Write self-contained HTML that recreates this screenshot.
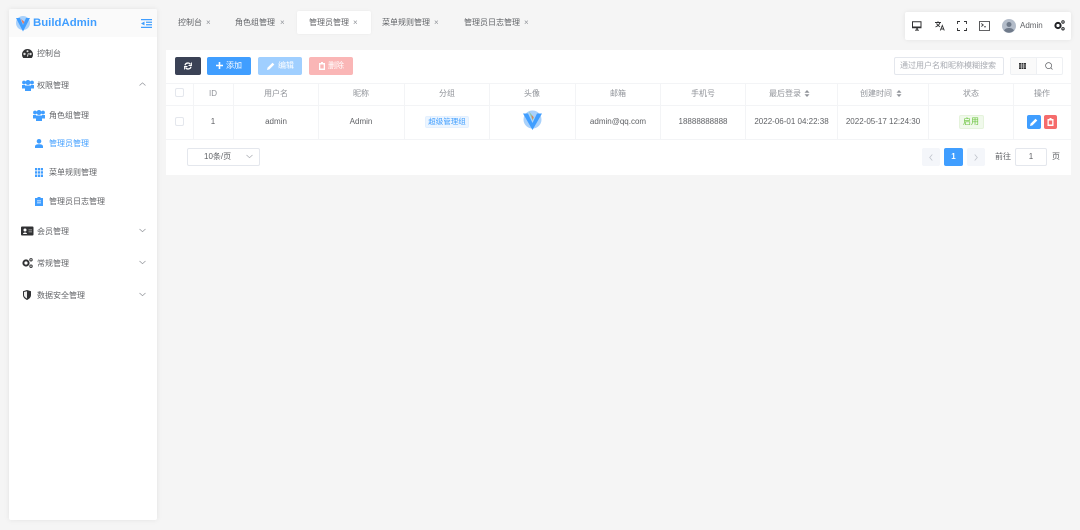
<!DOCTYPE html>
<html lang="zh"><head><meta charset="utf-8"><style>
*{box-sizing:border-box;margin:0;padding:0}
html,body{width:1080px;height:530px;overflow:hidden;background:#f5f5f5;font-family:"Liberation Sans","Noto Sans CJK SC",sans-serif;font-size:8px;color:#303133}
#w{position:absolute;left:0;top:0;width:1080px;height:530px;filter:blur(.35px)}
.a{position:absolute;white-space:nowrap}
.t{position:absolute;white-space:nowrap;line-height:12px}
.c{position:absolute;white-space:nowrap;text-align:center;line-height:12px;transform:translateX(-50%)}
.g{color:#606266}.h{color:#909399}
.ln{position:absolute;background:#f3f4f6}
svg{position:absolute;display:block}
.btn{position:absolute;top:57px;height:18px;border-radius:2px;color:#fff;line-height:18px}
.x{position:absolute;color:#909399;font-size:8px;line-height:12px}
</style></head><body><div id="w">
<div class="a" style="left:9px;top:9px;width:148px;height:511px;background:#fff;border-radius:2px;box-shadow:0 0 6px rgba(0,0,0,.08)"></div>
<div class="a" style="left:9px;top:9px;width:148px;height:28px;background:#fafafa;border-radius:2px 2px 0 0"></div>
<svg style="left:15px;top:15px" width="16" height="17" viewBox="0 0 16 17"><circle cx="8" cy="8" r="7" fill="#a9d1fb"/><path d="M1 3h4l3 7 3-7h4L8 16.500z" fill="#409eff"/><path d="M6 4l2 5 1.500-2z" fill="#e8785c"/></svg>
<div class="t" style="left:33px;top:16px;font-size:11.400px;line-height:15px;font-weight:700;color:#409eff">BuildAdmin</div>
<svg style="left:141px;top:19px" width="11" height="9" viewBox="0 0 11 9" fill="#409eff"><path d="M0 0h11v1.300H0zM5 2.600h6v1.300H5zM5 5.100h6v1.300H5zM0 7.700h11V9H0zM3.500 2.500v4L0 4.500z"/></svg>

<svg style="left:22px;top:49px" width="11" height="9" viewBox="0 0 11 9"><path d="M5.500 0A5.500 5.500 0 0 0 0 5.500C0 7 .5 8 1.300 9h8.400C10.500 8 11 7 11 5.500A5.500 5.500 0 0 0 5.500 0z" fill="#303133"/><circle cx="2.500" cy="5" r="1.200" fill="#ddd"/><circle cx="8.500" cy="5" r="1.200" fill="#ddd"/><circle cx="5.500" cy="2.300" r="1" fill="#ddd"/><path d="M5 7.500l1-3.500.7.200L6 7.500z" fill="#fff"/></svg>
<div class="t g" style="left:37px;top:48px">控制台</div>
<svg style="left:22px;top:80px" width="12" height="11" viewBox="0 0 12 11" fill="#409eff"><circle cx="2" cy="2.500" r="1.900"/><circle cx="10" cy="2.500" r="1.900"/><circle cx="6" cy="2.500" r="2.500"/><path d="M0 5h3v3.500H0zM9 5h3v3.500H9z"/><path d="M3 5.500h6V11H3z"/></svg>
<div class="t g" style="left:37px;top:80px">权限管理</div>
<svg style="left:139px;top:82px" width="7" height="5" viewBox="0 0 7 5" fill="none" stroke="#909399" stroke-width=".7"><path d="M.5 3.500L3.500 .8l3 2.700"/></svg>

<svg style="left:33px;top:110px" width="12" height="11" viewBox="0 0 12 11" fill="#409eff"><circle cx="2" cy="2.500" r="1.900"/><circle cx="10" cy="2.500" r="1.900"/><circle cx="6" cy="2.500" r="2.500"/><path d="M0 5h3v3.500H0zM9 5h3v3.500H9z"/><path d="M3 5.500h6V11H3z"/></svg>
<div class="t g" style="left:49px;top:110px">角色组管理</div>
<svg style="left:35px;top:139px" width="8" height="9" viewBox="0 0 8 9" fill="#409eff"><circle cx="4" cy="2.300" r="2.300"/><path d="M0 9V7.500C0 6 1.500 5.300 4 5.300S8 6 8 7.500V9z"/></svg>
<div class="t" style="left:49px;top:138px;color:#409eff">管理员管理</div>
<svg style="left:35px;top:168px" width="8" height="9" viewBox="0 0 8 9" fill="#409eff"><path d="M0 0h2.200v2.400H0zM2.900 0h2.200v2.400H2.900zM5.800 0H8v2.400H5.800zM0 3.200h2.200v2.400H0zM2.900 3.200h2.200v2.400H2.900zM5.800 3.200H8v2.400H5.800zM0 6.500h2.200V9H0zM2.900 6.500h2.200V9H2.900zM5.800 6.500H8V9H5.800z"/></svg>
<div class="t g" style="left:49px;top:167px">菜单规则管理</div>
<svg style="left:35px;top:197px" width="8" height="9" viewBox="0 0 8 9" fill="#409eff"><path d="M0 1h2.500V0h3v1H8v8H0zM2 3.500v.8h4v-.8zM2 5.500v.8h4v-.8z" fill-rule="evenodd"/></svg>
<div class="t g" style="left:49px;top:196px">管理员日志管理</div>

<svg style="left:21px;top:226px" width="13" height="10" viewBox="0 0 13 10"><rect width="12.500" height="9" y=".5" rx="1" fill="#303133"/><circle cx="4" cy="4" r="1.500" fill="#fff"/><path d="M2 8c0-2 4-2 4 0z" fill="#fff"/><path d="M7.500 3.500h3.500v.8H7.500zM7.500 5.500h3.500v.8H7.500z" fill="#bbb"/></svg>
<div class="t g" style="left:37px;top:226px">会员管理</div>
<svg style="left:139px;top:228px" width="7" height="5" viewBox="0 0 7 5" fill="none" stroke="#909399" stroke-width=".7"><path d="M.5 1l3 2.700 3-2.700"/></svg>
<svg style="left:22px;top:258px" width="11" height="10" viewBox="0 0 11 10"><circle cx="4" cy="5" r="2.600" fill="none" stroke="#303133" stroke-width="2"/><circle cx="9" cy="1.800" r="1.200" fill="none" stroke="#303133" stroke-width="1"/><circle cx="9" cy="8.200" r="1.200" fill="none" stroke="#303133" stroke-width="1"/></svg>
<div class="t g" style="left:37px;top:258px">常规管理</div>
<svg style="left:139px;top:260px" width="7" height="5" viewBox="0 0 7 5" fill="none" stroke="#909399" stroke-width=".7"><path d="M.5 1l3 2.700 3-2.700"/></svg>
<svg style="left:23px;top:290px" width="8" height="10" viewBox="0 0 8 10"><path d="M4 0l4 1.200V5c0 2.500-2 4-4 5-2-1-4-2.500-4-5V1.200z" fill="#303133"/><path d="M4 1.200L1 2v3c0 1.700 1.500 2.800 3 3.500z" fill="#eee"/></svg>
<div class="t g" style="left:37px;top:290px">数据安全管理</div>
<svg style="left:139px;top:292px" width="7" height="5" viewBox="0 0 7 5" fill="none" stroke="#909399" stroke-width=".7"><path d="M.5 1l3 2.700 3-2.700"/></svg>

<div class="t g" style="left:178px;top:17px">控制台</div><div class="x" style="left:206px;top:17px">×</div>
<div class="t g" style="left:235px;top:17px">角色组管理</div><div class="x" style="left:280px;top:17px">×</div>
<div class="a" style="left:297px;top:11px;width:74px;height:23px;background:#fff;border-radius:2px;box-shadow:0 0 3px rgba(0,0,0,.05)"></div>
<div class="t g" style="left:309px;top:17px">管理员管理</div><div class="x" style="left:353px;top:17px">×</div>
<div class="t g" style="left:382px;top:17px">菜单规则管理</div><div class="x" style="left:434px;top:17px">×</div>
<div class="t g" style="left:464px;top:17px">管理员日志管理</div><div class="x" style="left:524px;top:17px">×</div>

<div class="a" style="left:905px;top:12px;width:166px;height:28px;background:#fff;border-radius:2px;box-shadow:0 0 5px rgba(0,0,0,.08)"></div>
<svg style="left:912px;top:21px" width="10" height="10" viewBox="0 0 10 10"><path d="M.5.800h8.500v6H.5z" fill="none" stroke="#303133"/><path d="M1 5.500h8v1.300H1zM3 8.800h4v.8H3zM4.300 6.500h1.500v2.500H4.300z" fill="#303133"/></svg>
<svg style="left:935px;top:21px" width="10" height="10" viewBox="0 0 10 10" fill="none" stroke="#303133" stroke-width=".9"><path d="M0 1.500h6M3 .2v1.300M5 1.500C4.500 3.500 3 5 .5 6M1.500 2.500C2.500 4.500 3.500 5 5 5.800M5.300 9.500l2-5 2 5M6 8h2.600"/></svg>
<svg style="left:957px;top:21px" width="10" height="10" viewBox="0 0 10 10" fill="none" stroke="#303133" stroke-width=".9"><path d="M.5 3V.5H3M7 .5h2.500V3M9.500 7v2.500H7M3 9.500H.5V7"/></svg>
<svg style="left:979px;top:21px" width="11" height="10" viewBox="0 0 11 10" fill="none" stroke="#303133" stroke-width=".8"><path d="M.5.500h10v9H.5zM2.300 2.500L4.300 4 2.300 5.500M5 5.800h2"/></svg>
<svg style="left:1002px;top:19px" width="14" height="14" viewBox="0 0 14 14"><circle cx="7" cy="7" r="7" fill="#b3bcc9"/><circle cx="7" cy="5.500" r="2.500" fill="#6f7a8a"/><path d="M2 11.500C3 9.500 5 9 7 9s4 .5 5 2.500A7 7 0 0 1 2 11.500z" fill="#6f7a8a"/></svg>
<div class="t g" style="left:1020px;top:20px">Admin</div>
<svg style="left:1054px;top:20px" width="11" height="11" viewBox="0 0 11 11"><circle cx="4" cy="5.500" r="2.600" fill="none" stroke="#202225" stroke-width="2"/><circle cx="9" cy="2" r="1.200" fill="none" stroke="#202225" stroke-width="1"/><circle cx="9" cy="8.800" r="1.200" fill="none" stroke="#202225" stroke-width="1"/></svg>

<div class="a" style="left:166px;top:50px;width:905px;height:125px;background:#fff"></div>
<div class="a" style="left:175px;top:57px;width:26px;height:18px;background:#3b4256;border-radius:2px"></div>
<svg style="left:184px;top:62px" width="8" height="8" viewBox="0 0 8 8" fill="none" stroke="#fff" stroke-width="1.300"><path d="M1 3.300A3 3 0 0 1 6.500 2.500M7 4.700A3 3 0 0 1 1.500 5.500"/><path d="M7.500.5v3h-3M.5 7.500v-3h3" stroke-width=".9"/></svg>
<div class="btn" style="left:207px;width:44px;background:#409eff"></div>
<svg style="left:216px;top:62px" width="7" height="7" viewBox="0 0 7 7" fill="#fff"><path d="M2.700 0h1.600v2.700H7v1.600H4.300V7H2.700V4.300H0V2.700h2.700z"/></svg>
<div class="t" style="left:226px;top:60px;color:#fff">添加</div>
<div class="btn" style="left:258px;width:44px;background:#a0cfff"></div>
<svg style="left:267px;top:62px" width="8" height="8" viewBox="0 0 8 8" fill="#fff"><path d="M0 8l.6-2.400L5.500.7l1.800 1.800L2.400 7.400z"/></svg>
<div class="t" style="left:278px;top:60px;color:#fff">编辑</div>
<div class="btn" style="left:309px;width:44px;background:#fab6b6"></div>
<svg style="left:319px;top:62px" width="6" height="8" viewBox="0 0 6 8" fill="#fff"><path d="M0 1h2V0h2v1h2v7H0zM1.300 2.500v4h3.400v-4z" fill-rule="evenodd"/></svg>
<div class="t" style="left:328px;top:60px;color:#fff">删除</div>

<div class="a" style="left:894px;top:57px;width:110px;height:18px;border:1px solid #e4e7ed;border-radius:2px"></div>
<div class="t" style="left:900px;top:60px;color:#a8abb2">通过用户名和昵称模糊搜索</div>
<div class="a" style="left:1010px;top:57px;width:53px;height:18px;border:1px solid #eef0f3;border-radius:2px"><div style="position:absolute;left:0;top:0;width:26px;height:16px;background:#fafafa;border-right:1px solid #eef0f3"></div></div>
<svg style="left:1019px;top:63px" width="7" height="6" viewBox="0 0 7 6" fill="#303133"><path d="M0 0h2v1.700H0zM2.500 0h2v1.700h-2zM5 0h2v1.700H5zM0 2.200h2v1.600H0zM2.500 2.200h2v1.600h-2zM5 2.200h2v1.600H5zM0 4.300h2V6H0zM2.500 4.300h2V6h-2zM5 4.300h2V6H5z"/></svg>
<svg style="left:1045px;top:62px" width="8" height="8" viewBox="0 0 8 8" fill="none" stroke="#606266" stroke-width=".7"><circle cx="3.600" cy="3.600" r="3"/><path d="M5.800 5.800L7.500 7.500"/></svg>

<div class="ln" style="left:166px;top:83px;width:905px;height:1px"></div>
<div class="ln" style="left:166px;top:105px;width:905px;height:1px"></div>
<div class="ln" style="left:166px;top:139px;width:905px;height:1px"></div>
<div class="ln" style="left:193px;top:83px;width:1px;height:56px"></div>
<div class="ln" style="left:233px;top:83px;width:1px;height:56px"></div>
<div class="ln" style="left:318px;top:83px;width:1px;height:56px"></div>
<div class="ln" style="left:404px;top:83px;width:1px;height:56px"></div>
<div class="ln" style="left:489px;top:83px;width:1px;height:56px"></div>
<div class="ln" style="left:575px;top:83px;width:1px;height:56px"></div>
<div class="ln" style="left:660px;top:83px;width:1px;height:56px"></div>
<div class="ln" style="left:745px;top:83px;width:1px;height:56px"></div>
<div class="ln" style="left:837px;top:83px;width:1px;height:56px"></div>
<div class="ln" style="left:928px;top:83px;width:1px;height:56px"></div>
<div class="ln" style="left:1013px;top:83px;width:1px;height:56px"></div>

<div class="a" style="left:175px;top:88px;width:9px;height:9px;border:1px solid #e4e7ed;border-radius:2px"></div>
<div class="a" style="left:175px;top:117px;width:9px;height:9px;border:1px solid #e4e7ed;border-radius:2px"></div>

<div class="c h" style="left:213px;top:88px">ID</div>
<div class="c h" style="left:276px;top:88px">用户名</div>
<div class="c h" style="left:361px;top:88px">昵称</div>
<div class="c h" style="left:447px;top:88px">分组</div>
<div class="c h" style="left:532px;top:88px">头像</div>
<div class="c h" style="left:618px;top:88px">邮箱</div>
<div class="c h" style="left:703px;top:88px">手机号</div>
<div class="t h" style="left:769px;top:88px">最后登录</div>
<svg style="left:804px;top:90px" width="6" height="7" viewBox="0 0 6 7" fill="#909399"><path d="M3 0l2.500 2.700H.5zM3 7L.5 4.300h5z"/></svg>
<div class="t h" style="left:860px;top:88px">创建时间</div>
<svg style="left:896px;top:90px" width="6" height="7" viewBox="0 0 6 7" fill="#909399"><path d="M3 0l2.500 2.700H.5zM3 7L.5 4.300h5z"/></svg>
<div class="c h" style="left:971px;top:88px">状态</div>
<div class="c h" style="left:1042px;top:88px">操作</div>

<div class="c g" style="left:213px;top:116px">1</div>
<div class="c g" style="left:276px;top:116px">admin</div>
<div class="c g" style="left:361px;top:116px">Admin</div>
<div class="a" style="left:425px;top:116px;width:44px;height:12px;background:#ecf5ff;border-radius:2px;border:1px solid #e3f0ff"></div>
<div class="c" style="left:447px;top:116px;color:#409eff;font-size:7.500px">超级管理组</div>
<svg style="left:523px;top:110px" width="19" height="20" viewBox="0 0 19 20"><circle cx="9.500" cy="9.500" r="9" fill="#a9d1fb"/><path d="M0 3.500h5L9.500 13 14 3.500h5L9.500 20z" fill="#409eff"/><path d="M6 1.500l3.500 9 1.500-3z" fill="#8fc7a0"/><path d="M8.500 5l1 4.500 1-2.500z" fill="#e8785c"/></svg>
<div class="c g" style="left:618px;top:116px">admin@qq.com</div>
<div class="c g" style="left:703px;top:116px">18888888888</div>
<div class="c g" style="left:791.500px;top:116px">2022-06-01 04:22:38</div>
<div class="c g" style="left:883px;top:116px">2022-05-17 12:24:30</div>
<div class="a" style="left:959px;top:115px;width:25px;height:14px;background:#f0f9eb;border:1px solid #e5f3dc;border-radius:2px"></div>
<div class="c" style="left:971px;top:116px;color:#67c23a">启用</div>
<div class="a" style="left:1027px;top:115px;width:14px;height:14px;background:#409eff;border-radius:2px"></div>
<svg style="left:1030px;top:118px" width="8" height="8" viewBox="0 0 8 8" fill="#fff"><path d="M0 8l.6-2.400L5.500.7l1.800 1.800L2.400 7.400z"/></svg>
<div class="a" style="left:1044px;top:115px;width:13px;height:14px;background:#f56c6c;border-radius:2px"></div>
<svg style="left:1047px;top:118px" width="7" height="8" viewBox="0 0 7 8" fill="#fff"><path d="M.5 1h2V0h2v1h2v7h-6zM1.800 2.500v4h3.400v-4z" fill-rule="evenodd"/></svg>

<div class="a" style="left:187px;top:148px;width:73px;height:18px;border:1px solid #e4e7ed;border-radius:2px"></div>
<div class="t g" style="left:204px;top:151px">10条/页</div>
<svg style="left:246px;top:154px" width="7" height="5" viewBox="0 0 7 5" fill="none" stroke="#a8abb2" stroke-width=".7"><path d="M.5 1l3 2.700 3-2.700"/></svg>
<div class="a" style="left:922px;top:148px;width:18px;height:18px;background:#f4f6fa;border-radius:2px"></div>
<svg style="left:929px;top:154px" width="4" height="7" viewBox="0 0 4 7" fill="none" stroke="#c0c4cc" stroke-width=".8"><path d="M3.300.5L.7 3.500l2.600 3"/></svg>
<div class="a" style="left:944px;top:148px;width:19px;height:18px;background:#409eff;border-radius:2px"></div>
<div class="c" style="left:953.500px;top:151px;color:#fff;font-weight:700">1</div>
<div class="a" style="left:967px;top:148px;width:18px;height:18px;background:#f4f6fa;border-radius:2px"></div>
<svg style="left:974px;top:154px" width="4" height="7" viewBox="0 0 4 7" fill="none" stroke="#c0c4cc" stroke-width=".8"><path d="M.7.500l2.600 3-2.600 3"/></svg>
<div class="t g" style="left:995px;top:151px">前往</div>
<div class="a" style="left:1015px;top:148px;width:32px;height:18px;border:1px solid #e4e7ed;border-radius:2px"></div>
<div class="c g" style="left:1031px;top:151px">1</div>
<div class="t g" style="left:1052px;top:151px">页</div>
</div></body></html>
